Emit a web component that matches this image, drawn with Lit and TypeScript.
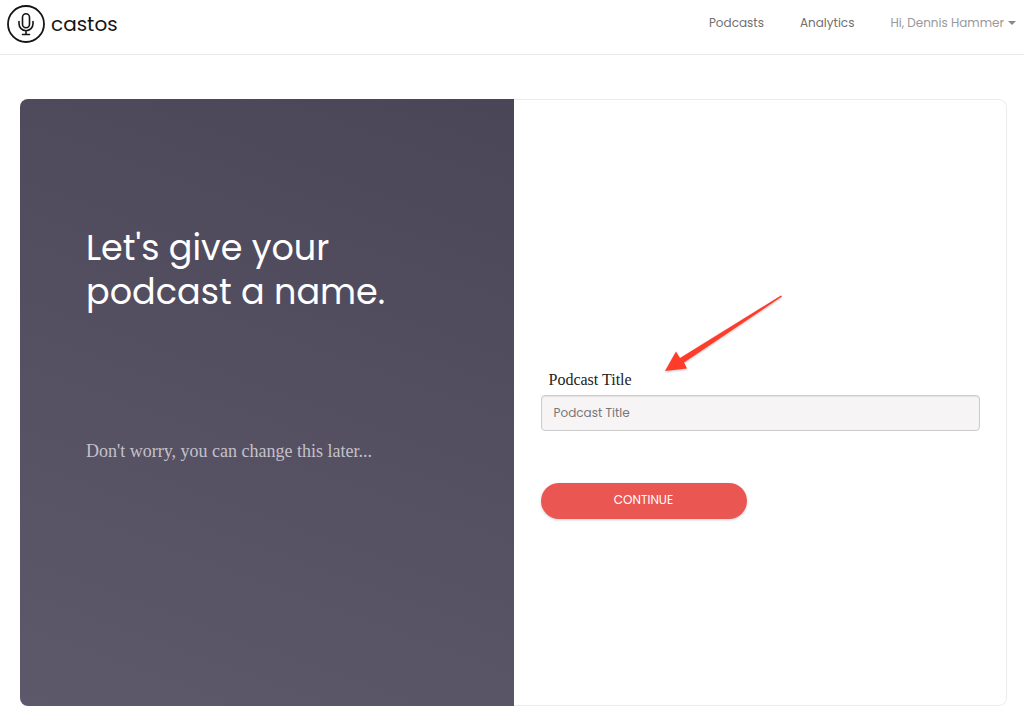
import { LitElement, html, css, svg } from "lit";
import { customElement, state } from "lit/decorators.js";

@customElement("app-header")
export class AppHeader extends LitElement {
  static styles = css`
    :host {
      display: block;
      border-bottom: 1px solid #e9e9e9;
      background: #fff;
    }
    .bar {
      display: flex;
      align-items: flex-start;
      justify-content: space-between;
      height: 54px;
      box-sizing: border-box;
      padding: 4px 8px 0 6px;
    }
    .brand {
      display: flex;
      align-items: center;
      gap: 5px;
      height: 40px;
      color: #151515;
      font-size: 20px;
      line-height: 40px;
      text-decoration: none;
    }
    .logo {
      display: block;
      width: 40px;
      height: 40px;
    }
    .menu {
      display: flex;
      gap: 36px;
      align-items: center;
      height: 38px;
      font-size: 12px;
      line-height: 20px;
    }
    .link {
      color: #707070;
      text-decoration: none;
    }
    .account {
      display: flex;
      align-items: center;
      gap: 4px;
      padding: 0;
      border: 0;
      background: none;
      color: #999;
      font: inherit;
      cursor: pointer;
    }
    .caret {
      width: 8px;
      height: 4px;
      fill: #888;
    }
  `;

  render() {
    return html`
      <header class="bar">
        <a class="brand" href="#">
          <svg class="logo" viewBox="0 0 40 40" fill="none" stroke="#151515" aria-hidden="true">
            <circle cx="20" cy="20" r="18" stroke-width="1.8" />
            <rect x="16.500" y="9.7" width="7" height="14" rx="3.500" stroke-width="1.6" />
            <path
              d="M13 17.5v2.2a7 7 0 0 0 14 0v-2.2M20 27v3.500M16.500 30.500h7"
              stroke-width="1.6"
              stroke-linecap="round"
            />
          </svg>
          <span>castos</span>
        </a>
        <nav class="menu">
          <a class="link" href="#podcasts">Podcasts</a>
          <a class="link" href="#analytics">Analytics</a>
          <button class="account" type="button">
            <span>Hi, Dennis Hammer</span>
            <svg class="caret" viewBox="0 0 8 4" aria-hidden="true"><path d="M0 0h8L4 4z" /></svg>
          </button>
        </nav>
      </header>
    `;
  }
}

@customElement("app-root")
export class AppRoot extends LitElement {
  static styles = css`
    :host {
      display: flex;
      flex-direction: column;
      min-height: 100vh;
      box-sizing: border-box;
      background: #fff;
      font-family: Poppins, Inter, sans-serif;
    }
    .card {
      flex: 1;
      display: grid;
      grid-template-columns: 1fr 1fr;
      margin: 44px 17px 17px 20px;
      border-radius: 8px;
      overflow: hidden;
    }
    .intro {
      padding: 127px 66px 40px;
      background: linear-gradient(200deg, #4b4558 0%, #554f62 50%, #5e586b 100%);
    }
    .title {
      margin: 0;
      color: #fff;
      font-size: 35px;
      font-weight: 400;
      line-height: 44px;
    }
    .note {
      margin: 126px 0 0;
      color: #c4c1ca;
      font-family: "Liberation Serif", serif;
      font-size: 18px;
      line-height: 22px;
    }
    .form {
      position: relative;
      box-sizing: border-box;
      padding: 270px 26px 40px 27px;
      border: 1px solid #ebebeb;
      border-left: 0;
      border-radius: 0 8px 8px 0;
    }
    .label {
      display: block;
      width: max-content;
      padding: 0 8px;
      margin: 0 0 5px;
      color: #222;
      font-family: "Liberation Serif", serif;
      font-size: 16px;
      line-height: 20px;
    }
    .field {
      display: block;
      width: 100%;
      height: 36px;
      box-sizing: border-box;
      margin: 0 0 52px;
      padding: 0 12px;
      border: 1px solid #ccc;
      border-radius: 4px;
      background: #f6f4f5;
      box-shadow: inset 0 1px 1px rgba(0, 0, 0, 0.08);
      color: #444;
      font-family: inherit;
      font-size: 12px;
    }
    .field::placeholder {
      color: #777;
      opacity: 1;
    }
    .submit {
      display: block;
      width: 206px;
      height: 36px;
      padding: 0 0 3px;
      border: 0;
      border-radius: 18px;
      background: #ea5753;
      box-shadow: 0 1px 3px rgba(0, 0, 0, 0.18);
      color: #fff;
      font-family: inherit;
      font-size: 12px;
      line-height: 20px;
      cursor: pointer;
    }
    .pointer {
      position: absolute;
      left: 146px;
      top: 190px;
      width: 130px;
      height: 90px;
      filter: drop-shadow(0 1px 1px rgba(0, 0, 0, 0.25));
      pointer-events: none;
    }
  `;

  @state() private name = "";

  private onInput(e: Event) {
    this.name = (e.target as HTMLInputElement).value;
  }

  private onSubmit(e: Event) {
    e.preventDefault();
  }

  render() {
    return html`
      <app-header></app-header>
      <main class="card">
        <section class="intro">
          <h1 class="title">Let's give your<br />podcast a name.</h1>
          <p class="note">Don't worry, you can change this later...</p>
        </section>
        <form class="form" @submit=${this.onSubmit}>
          <label class="label" for="title">Podcast Title</label>
          <input
            class="field"
            id="title"
            type="text"
            placeholder="Podcast Title"
            .value=${this.name}
            @input=${this.onInput}
          />
          <button class="submit" type="submit">CONTINUE</button>
          <svg class="pointer" viewBox="0 0 130 90" aria-hidden="true">
            ${svg`<path fill="#ff3b2a" d="M5 81L16 61.500L20 68L121 5.500L122 6.500L24 72.500L27 78.500z" />`}
          </svg>
        </form>
      </main>
    `;
  }
}
